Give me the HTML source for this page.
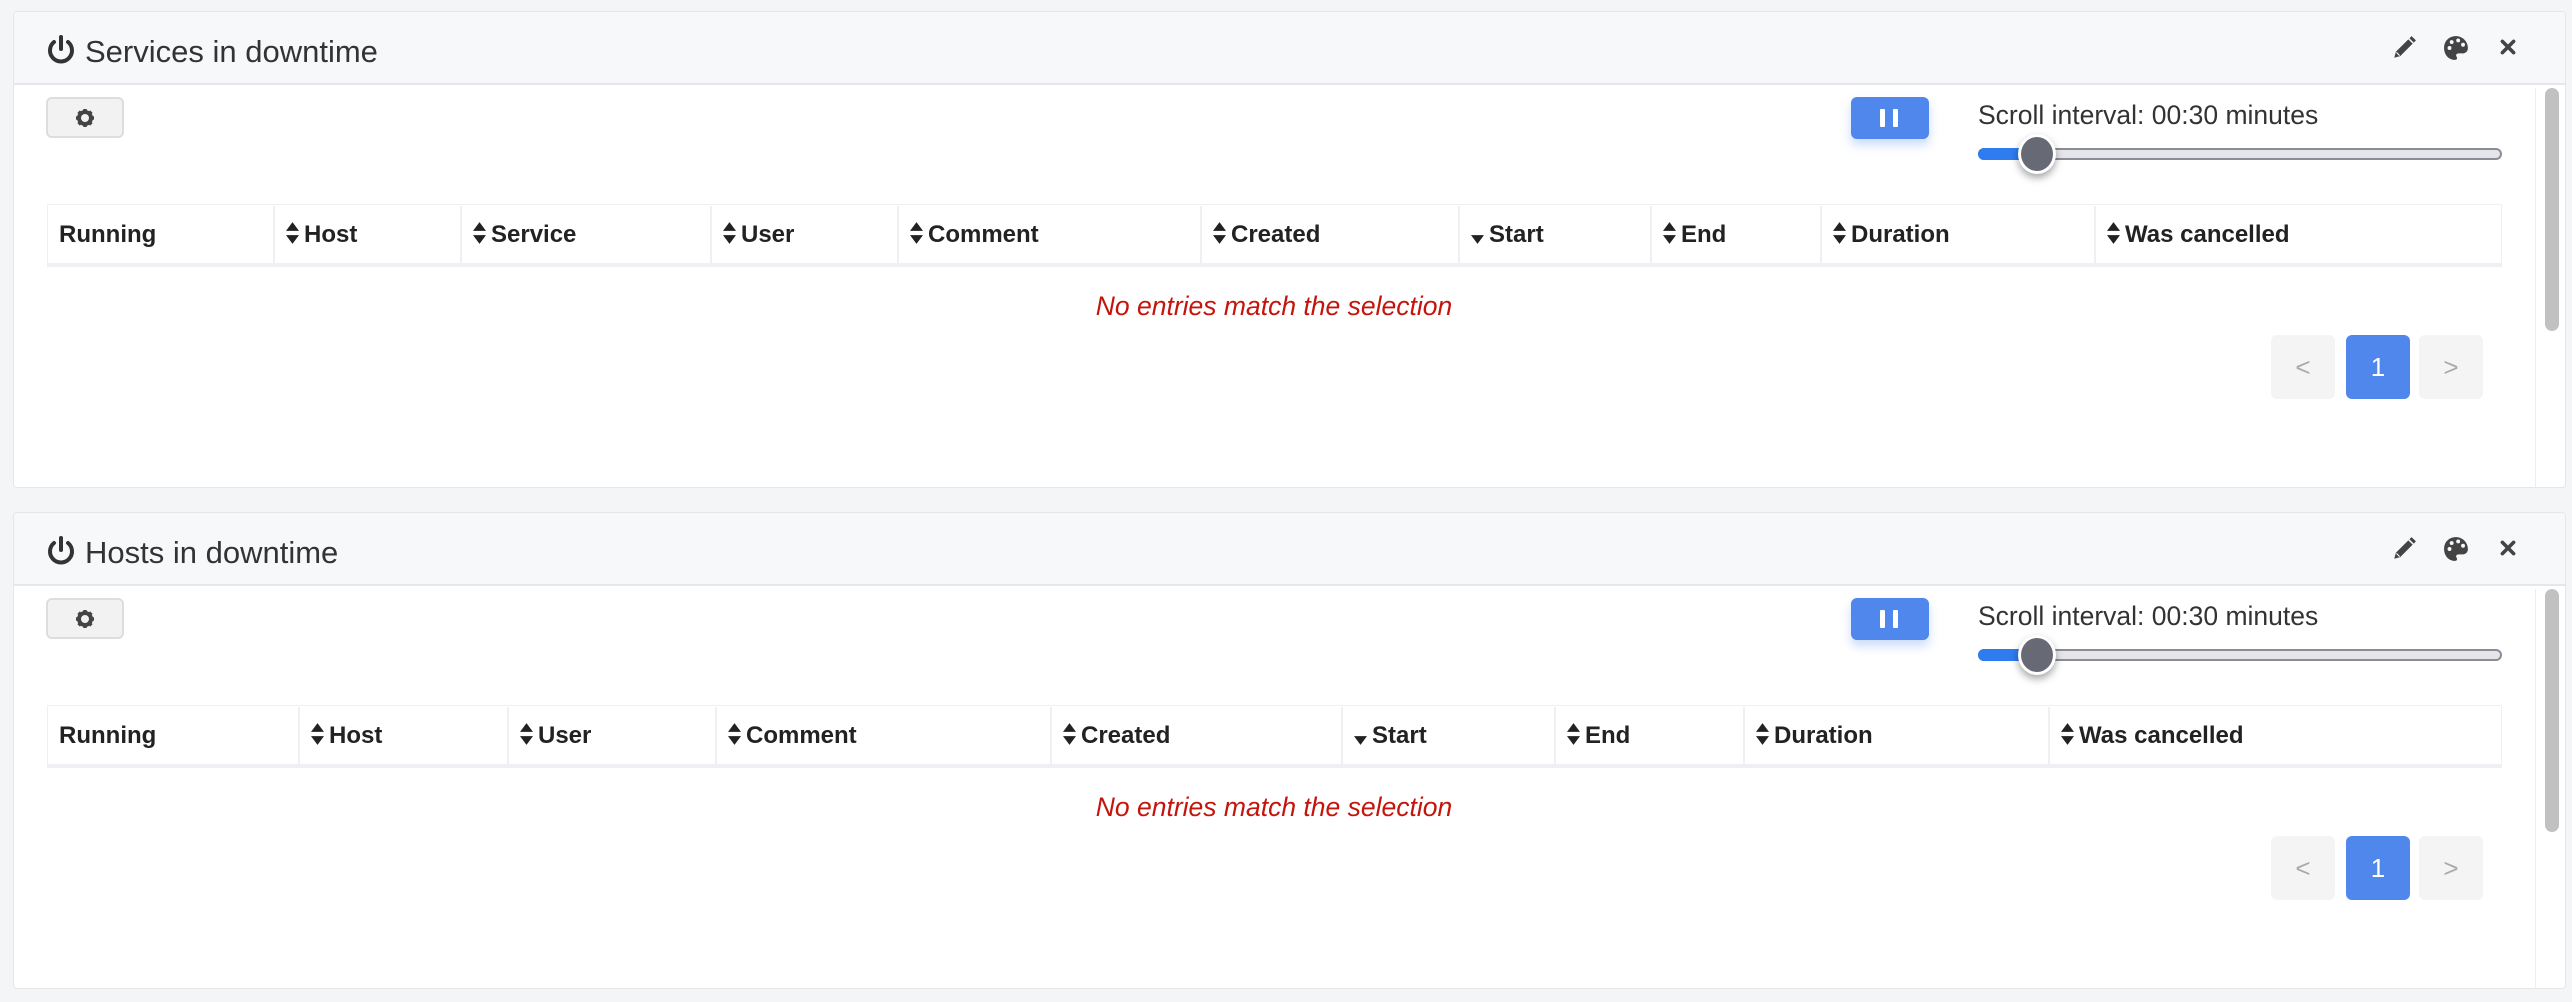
<!DOCTYPE html>
<html><head><style>
*{box-sizing:border-box;margin:0;padding:0}
body{width:2572px;height:1002px;background:#f4f5f7;font-family:"Liberation Sans",Arial,sans-serif;position:relative;overflow:hidden;color:#212529}
.panel{position:absolute;left:13px;width:2553px;height:477px;background:#fff;border:1px solid #e4e6ea;border-radius:4px;overflow:hidden}
.hdr{position:absolute;left:0;top:0;right:0;height:73px;background:#f7f8fa;border-bottom:2px solid #e5e7eb}
.title{position:absolute;left:71px;top:22px;font-size:31px;color:#333}
.pw{position:absolute;left:32px;top:22px}
.ic{position:absolute;top:23px}
.gear{position:absolute;left:32px;top:85px;width:78px;height:41px;background:#f2f2f2;border:2px solid #ddd;border-radius:6px}
.gear svg{position:absolute;left:27px;top:9px}
.pause{position:absolute;left:1837px;top:85px;width:78px;height:42px;background:#4f87ed;border-radius:6px;box-shadow:0 6px 10px rgba(79,135,237,.3)}
.pause i{position:absolute;top:12px;width:5px;height:18px;background:#fff;border-radius:1px}
.si{position:absolute;left:1964px;top:88px;font-size:26.5px;color:#333}
.track{position:absolute;left:1964px;top:136px;width:524px;height:12px;background:#e6e6ea;border:2px solid #8a8d96;border-radius:6px}
.fill{position:absolute;left:1964px;top:136px;width:45px;height:12px;background:#2f7bf0;border-radius:6px 0 0 6px}
.thumb{position:absolute;left:2004px;top:122px;width:38px;height:40px;border-radius:50%;background:#676a75;border:3px solid #fff;box-shadow:0 4px 8px rgba(0,0,0,.35)}
.tbl{position:absolute;left:33px;top:192px;width:2455px;height:63px;border:1px solid #eef0f3;border-bottom:4px solid #eef0f3}
.th{position:absolute;top:1px;height:58px;border-left:2px solid #eef0f3;font-weight:bold;font-size:24px;line-height:58px;padding-left:11px;color:#222}
.th svg{vertical-align:-3px;margin-right:5px}
.none{position:absolute;left:0;width:2520px;top:279px;text-align:center;font-style:italic;font-size:26.5px;color:#c4140c}
.pg{position:absolute;top:323px;width:64px;height:64px;border-radius:6px;background:#f4f4f4;font-size:26px;line-height:64px;text-align:center;color:#aaa}
.scr{position:absolute;left:2521px;top:76px;width:1px;height:400px;background:#eee}
.bar{position:absolute;left:2531px;top:76px;width:14px;height:243px;background:#c1c1c1;border-radius:7px}
</style></head><body>

<div class="panel" style="top:11px">
 <div class="hdr">
  <svg class="pw" width="30" height="32" viewBox="0 0 30 32"><path d="M15 3v12" stroke="#333" stroke-width="4" stroke-linecap="round"/><path d="M8 8a11 11 0 1 0 14 0" fill="none" stroke="#333" stroke-width="4" stroke-linecap="round"/></svg>
  <div class="title">Services in downtime</div>
  <svg class="ic" style="left:2377px" width="26" height="26" viewBox="0 0 24 24"><path d="M3 21l1.5-5.5L16 4l4 4L8.5 19.5z M17 3l2-2 4 4-2 2z" fill="#444"/><path d="M5 16l3 3" stroke="#fff" stroke-width="1"/></svg>
  <svg class="ic" style="left:2429px" width="26" height="26" viewBox="0 0 24 24"><path d="M12 1C5.5 1 1 5.5 1 12s4.5 11 10 11c2 0 2.5-1.5 1.5-3s0-3 2-3H18c3 0 5-2 5-5C23 6 18 1 12 1z" fill="#444"/><circle cx="6" cy="12" r="1.8" fill="#f7f8fa"/><circle cx="8" cy="6.5" r="1.8" fill="#f7f8fa"/><circle cx="14" cy="5" r="1.8" fill="#f7f8fa"/><circle cx="18.5" cy="9" r="1.8" fill="#f7f8fa"/></svg>
  <svg class="ic" style="left:2486px;top:27px" width="16" height="16" viewBox="0 0 20 20"><path d="M3 3l14 14M17 3L3 17" stroke="#444" stroke-width="4.5" stroke-linecap="round"/></svg>
 </div>
 <div class="gear"><svg width="20" height="20" viewBox="0 0 20 20"><circle cx="10" cy="10" r="6" fill="none" stroke="#444" stroke-width="4"/><path d="M10 1v4M10 15v4M1 10h4M15 10h4M3.6 3.6l2.8 2.8M13.6 13.6l2.8 2.8M3.6 16.4l2.8-2.8M13.6 6.4l2.8-2.8" stroke="#444" stroke-width="3.5"/></svg></div>
 <div class="pause"><i style="left:29px"></i><i style="left:42px"></i></div>
 <div class="si">Scroll interval: 00:30 minutes</div>
 <div class="track"></div><div class="fill"></div><div class="thumb"></div>
 <div class="tbl">
  <div class="th" style="left:0;border-left:0">Running</div>
  <div class="th" style="left:225px"><svg width="13" height="24" viewBox="0 0 12 22"><path d="M0 9L6 1l6 8zM0 13l6 8 6-8z" fill="#222"/></svg>Host</div>
  <div class="th" style="left:412px"><svg width="13" height="24" viewBox="0 0 12 22"><path d="M0 9L6 1l6 8zM0 13l6 8 6-8z" fill="#222"/></svg>Service</div>
  <div class="th" style="left:662px"><svg width="13" height="24" viewBox="0 0 12 22"><path d="M0 9L6 1l6 8zM0 13l6 8 6-8z" fill="#222"/></svg>User</div>
  <div class="th" style="left:849px"><svg width="13" height="24" viewBox="0 0 12 22"><path d="M0 9L6 1l6 8zM0 13l6 8 6-8z" fill="#222"/></svg>Comment</div>
  <div class="th" style="left:1152px"><svg width="13" height="24" viewBox="0 0 12 22"><path d="M0 9L6 1l6 8zM0 13l6 8 6-8z" fill="#222"/></svg>Created</div>
  <div class="th" style="left:1410px"><svg width="13" height="24" viewBox="0 0 12 22"><path d="M0 13l6 8 6-8z" fill="#222"/></svg>Start</div>
  <div class="th" style="left:1602px"><svg width="13" height="24" viewBox="0 0 12 22"><path d="M0 9L6 1l6 8zM0 13l6 8 6-8z" fill="#222"/></svg>End</div>
  <div class="th" style="left:1772px"><svg width="13" height="24" viewBox="0 0 12 22"><path d="M0 9L6 1l6 8zM0 13l6 8 6-8z" fill="#222"/></svg>Duration</div>
  <div class="th" style="left:2046px"><svg width="13" height="24" viewBox="0 0 12 22"><path d="M0 9L6 1l6 8zM0 13l6 8 6-8z" fill="#222"/></svg>Was cancelled</div>
 </div>
 <div class="none">No entries match the selection</div>
 <div class="pg" style="left:2257px">&lt;</div>
 <div class="pg" style="left:2332px;background:#4f87ed;color:#fff">1</div>
 <div class="pg" style="left:2405px">&gt;</div>
 <div class="scr"></div><div class="bar"></div>
</div>

<div class="panel" style="top:512px">
 <div class="hdr">
  <svg class="pw" width="30" height="32" viewBox="0 0 30 32"><path d="M15 3v12" stroke="#333" stroke-width="4" stroke-linecap="round"/><path d="M8 8a11 11 0 1 0 14 0" fill="none" stroke="#333" stroke-width="4" stroke-linecap="round"/></svg>
  <div class="title">Hosts in downtime</div>
  <svg class="ic" style="left:2377px" width="26" height="26" viewBox="0 0 24 24"><path d="M3 21l1.5-5.5L16 4l4 4L8.5 19.5z M17 3l2-2 4 4-2 2z" fill="#444"/><path d="M5 16l3 3" stroke="#fff" stroke-width="1"/></svg>
  <svg class="ic" style="left:2429px" width="26" height="26" viewBox="0 0 24 24"><path d="M12 1C5.5 1 1 5.5 1 12s4.5 11 10 11c2 0 2.5-1.5 1.5-3s0-3 2-3H18c3 0 5-2 5-5C23 6 18 1 12 1z" fill="#444"/><circle cx="6" cy="12" r="1.8" fill="#f7f8fa"/><circle cx="8" cy="6.5" r="1.8" fill="#f7f8fa"/><circle cx="14" cy="5" r="1.8" fill="#f7f8fa"/><circle cx="18.5" cy="9" r="1.8" fill="#f7f8fa"/></svg>
  <svg class="ic" style="left:2486px;top:27px" width="16" height="16" viewBox="0 0 20 20"><path d="M3 3l14 14M17 3L3 17" stroke="#444" stroke-width="4.5" stroke-linecap="round"/></svg>
 </div>
 <div class="gear"><svg width="20" height="20" viewBox="0 0 20 20"><circle cx="10" cy="10" r="6" fill="none" stroke="#444" stroke-width="4"/><path d="M10 1v4M10 15v4M1 10h4M15 10h4M3.6 3.6l2.8 2.8M13.6 13.6l2.8 2.8M3.6 16.4l2.8-2.8M13.6 6.4l2.8-2.8" stroke="#444" stroke-width="3.5"/></svg></div>
 <div class="pause"><i style="left:29px"></i><i style="left:42px"></i></div>
 <div class="si">Scroll interval: 00:30 minutes</div>
 <div class="track"></div><div class="fill"></div><div class="thumb"></div>
 <div class="tbl">
  <div class="th" style="left:0;border-left:0">Running</div>
  <div class="th" style="left:250px"><svg width="13" height="24" viewBox="0 0 12 22"><path d="M0 9L6 1l6 8zM0 13l6 8 6-8z" fill="#222"/></svg>Host</div>
  <div class="th" style="left:459px"><svg width="13" height="24" viewBox="0 0 12 22"><path d="M0 9L6 1l6 8zM0 13l6 8 6-8z" fill="#222"/></svg>User</div>
  <div class="th" style="left:667px"><svg width="13" height="24" viewBox="0 0 12 22"><path d="M0 9L6 1l6 8zM0 13l6 8 6-8z" fill="#222"/></svg>Comment</div>
  <div class="th" style="left:1002px"><svg width="13" height="24" viewBox="0 0 12 22"><path d="M0 9L6 1l6 8zM0 13l6 8 6-8z" fill="#222"/></svg>Created</div>
  <div class="th" style="left:1293px"><svg width="13" height="24" viewBox="0 0 12 22"><path d="M0 13l6 8 6-8z" fill="#222"/></svg>Start</div>
  <div class="th" style="left:1506px"><svg width="13" height="24" viewBox="0 0 12 22"><path d="M0 9L6 1l6 8zM0 13l6 8 6-8z" fill="#222"/></svg>End</div>
  <div class="th" style="left:1695px"><svg width="13" height="24" viewBox="0 0 12 22"><path d="M0 9L6 1l6 8zM0 13l6 8 6-8z" fill="#222"/></svg>Duration</div>
  <div class="th" style="left:2000px"><svg width="13" height="24" viewBox="0 0 12 22"><path d="M0 9L6 1l6 8zM0 13l6 8 6-8z" fill="#222"/></svg>Was cancelled</div>
 </div>
 <div class="none">No entries match the selection</div>
 <div class="pg" style="left:2257px">&lt;</div>
 <div class="pg" style="left:2332px;background:#4f87ed;color:#fff">1</div>
 <div class="pg" style="left:2405px">&gt;</div>
 <div class="scr"></div><div class="bar"></div>
</div>
</body></html>
